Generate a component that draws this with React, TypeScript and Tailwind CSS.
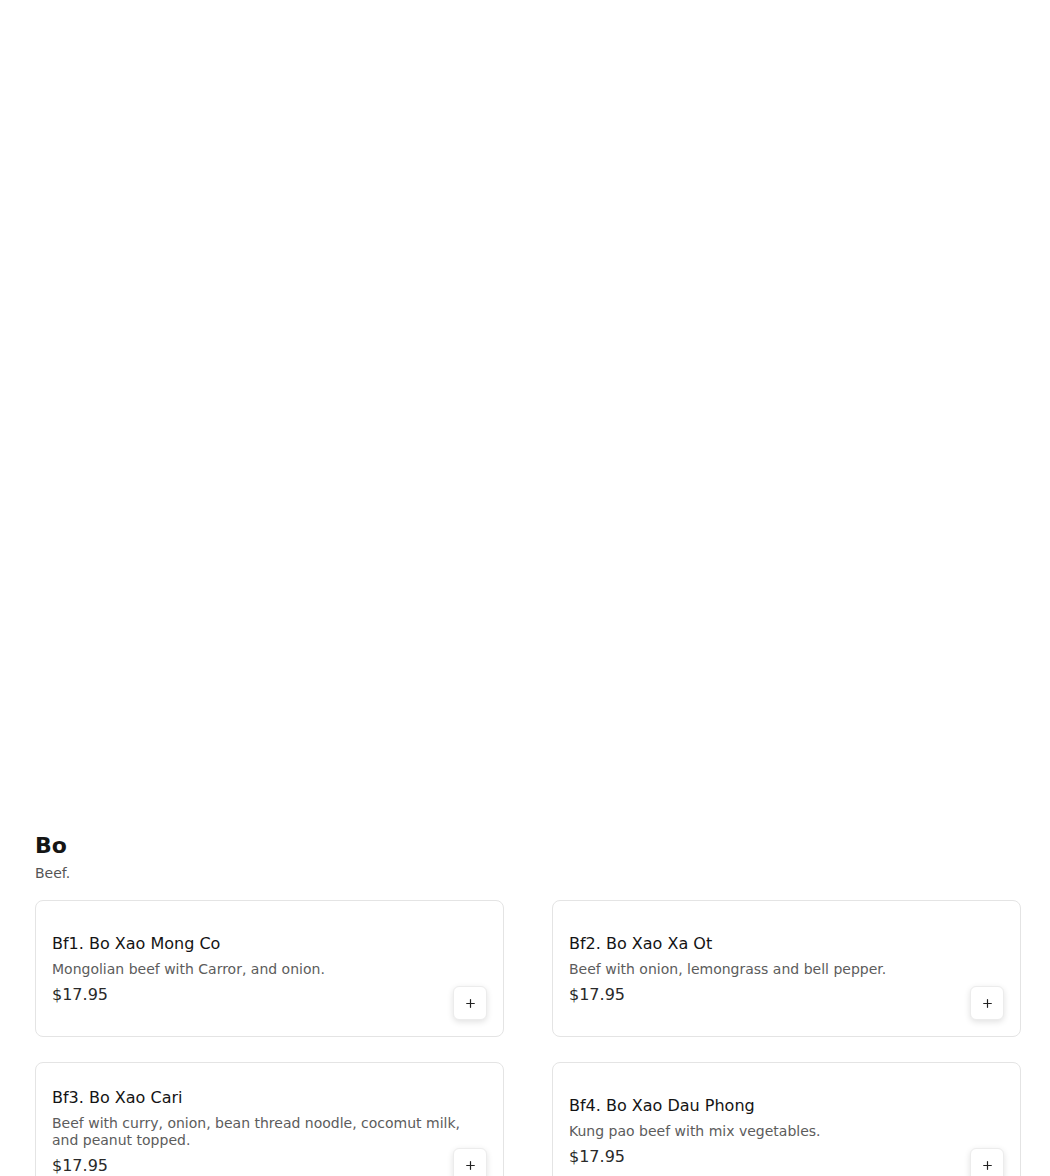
import { Plus } from "lucide-react"

const items = [
  { code: "Bf1", name: "Bo Xao Mong Co", desc: "Mongolian beef with Carror, and onion.", price: "$17.95" },
  { code: "Bf2", name: "Bo Xao Xa Ot", desc: "Beef with onion, lemongrass and bell pepper.", price: "$17.95" },
  {
    code: "Bf3",
    name: "Bo Xao Cari",
    desc: "Beef with curry, onion, bean thread noodle, cocomut milk, and peanut topped.",
    price: "$17.95",
  },
  { code: "Bf4", name: "Bo Xao Dau Phong", desc: "Kung pao beef with mix vegetables.", price: "$17.95" },
]

const MenuCard = ({ code, name, desc, price }: { code: string; name: string; desc: string; price: string }) => {
  return (
    <div className="relative flex min-h-[137px] rounded-lg border border-[#e4e4e4] bg-white px-4 pt-[18px] pb-4">
      <div className="flex flex-1 flex-col justify-center pr-4">
        <h3 className="text-[16px] leading-6 font-medium text-[#141414]">
          {code}. {name}
        </h3>
        <p className="mt-[5px] text-[14px] leading-[17px] text-[#5c5c5c]">{desc}</p>
        <p className="mt-[5px] text-[16px] leading-6 text-[#2a2a2a]">{price}</p>
      </div>
      <button className="absolute right-4 bottom-4 flex h-[34px] w-[34px] items-center justify-center rounded-md border border-[#ececec] bg-white shadow-[0_2px_6px_rgba(0,0,0,0.12)]">
        <Plus size={13} strokeWidth={2.2} className="text-[#222]" />
      </button>
    </div>
  )
}

export default function App() {
  return (
    <div className="min-h-screen bg-white font-['DejaVu_Sans',sans-serif]">
      <div className="h-[830px]" />
      <section className="px-[35px] pr-[29px]">
        <h2 className="text-[22px] leading-8 font-bold text-[#151515]">Bo</h2>
        <p className="mt-px text-[14px] leading-5 text-[#555]">Beef.</p>
        <div className="mt-[17px] grid grid-cols-2 gap-x-12 gap-y-[25px]">
          {items.map((item) => (
            <MenuCard key={item.code} {...item} />
          ))}
        </div>
      </section>
    </div>
  )
}
